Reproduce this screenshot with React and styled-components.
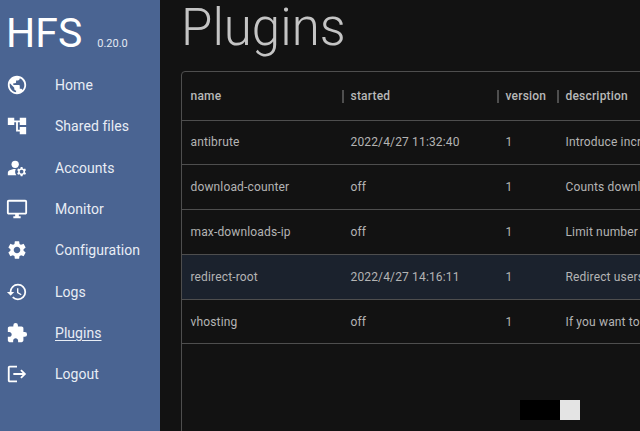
import React from 'react'
import styled, { createGlobalStyle } from 'styled-components'
import {
  MdPublic,
  MdAccountTree,
  MdManageAccounts,
  MdOutlineDesktopWindows,
  MdSettings,
  MdHistory,
  MdExtension,
  MdLogout,
} from 'react-icons/md'

const menu = [
  { label: 'Home', icon: MdPublic },
  { label: 'Shared files', icon: MdAccountTree },
  { label: 'Accounts', icon: MdManageAccounts },
  { label: 'Monitor', icon: MdOutlineDesktopWindows },
  { label: 'Configuration', icon: MdSettings },
  { label: 'Logs', icon: MdHistory },
  { label: 'Plugins', icon: MdExtension, active: true },
  { label: 'Logout', icon: MdLogout },
]

const plugins = [
  { name: 'antibrute', started: '2022/4/27 11:32:40', version: 1, description: 'Introduce increasing delays between login attempts' },
  { name: 'download-counter', started: 'off', version: 1, description: 'Counts downloads for each file' },
  { name: 'max-downloads-ip', started: 'off', version: 1, description: 'Limit number of concurrent downloads per IP' },
  { name: 'redirect-root', started: '2022/4/27 14:16:11', version: 1, description: 'Redirect users to another folder', hovered: true },
  { name: 'vhosting', started: 'off', version: 1, description: 'If you want to have different home folders' },
]

function App() {
  return (
    <Page>
      <GlobalStyle />
      <Sidebar>
        <Brand>
          <Logo>HFS</Logo>
          <Version>0.20.0</Version>
        </Brand>
        <Nav>
          {menu.map(({ label, icon: Icon, active }) => (
            <NavItem key={label}>
              <IconSlot><Icon size={22} /></IconSlot>
              <NavLabel $active={active}>{label}</NavLabel>
            </NavItem>
          ))}
        </Nav>
      </Sidebar>
      <Main>
        <Title>Plugins</Title>
        <TableBox>
          <Table>
            <thead>
              <tr>
                <HeadCell $width={160}>name</HeadCell>
                <HeadCell $width={155} $divider>started</HeadCell>
                <HeadCell $width={60} $divider>version</HeadCell>
                <HeadCell $divider>description</HeadCell>
              </tr>
            </thead>
            <tbody>
              {plugins.map(p => (
                <Row key={p.name} $hovered={p.hovered}>
                  <Cell>{p.name}</Cell>
                  <Cell>{p.started}</Cell>
                  <Cell>{p.version}</Cell>
                  <Cell>{p.description}</Cell>
                </Row>
              ))}
            </tbody>
          </Table>
        </TableBox>
      </Main>
      <Redaction>
        <RedactionDark />
        <RedactionLight />
      </Redaction>
    </Page>
  )
}

export default App

const GlobalStyle = createGlobalStyle`
  html, body {
    margin: 0;
    height: 100%;
    background: #121212;
    overflow: hidden;
  }
`

const Page = styled.div`
  position: relative;
  display: flex;
  width: 640px;
  height: 431px;
  overflow: hidden;
  font-family: Roboto, "Liberation Sans", sans-serif;
`

const Sidebar = styled.aside`
  flex: 0 0 160px;
  background: #4a6492;
  color: #fff;
`

const Brand = styled.div`
  display: flex;
  align-items: baseline;
  gap: 15px;
  padding: 9px 0 0 6px;
  height: 56px;
  box-sizing: border-box;
`

const Logo = styled.div`
  font-size: 41px;
  line-height: 48px;
  font-weight: 400;
`

const Version = styled.span`
  font-size: 11px;
  color: #e4e9f2;
`

const Nav = styled.nav`
  display: flex;
  flex-direction: column;
  padding-top: 8.5px;
`

const NavItem = styled.div`
  display: flex;
  align-items: center;
  height: 41.3px;
  padding-left: 6px;
`

const IconSlot = styled.span`
  display: flex;
  width: 49px;
  color: #fff;
`

const NavLabel = styled.span`
  font-size: 14px;
  letter-spacing: 0.05px;
  color: #e8edf5;
  text-decoration: ${p => (p.$active ? 'underline' : 'none')};
  text-underline-offset: 2px;
`

const Main = styled.main`
  flex: 1;
  min-width: 0;
  background: #121212;
  padding-left: 21px;
`

const Title = styled.h1`
  margin: 0 0 15px;
  height: 56px;
  font-size: 51px;
  line-height: 56px;
  font-weight: 300;
  color: #c4c4c4;
`

const TableBox = styled.div`
  width: 640px;
  height: 400px;
  border: 1px solid #4e4e4e;
  border-radius: 4px;
`

const Table = styled.table`
  border-collapse: collapse;
  table-layout: fixed;
  width: 100%;
`

const HeadCell = styled.th`
  position: relative;
  width: ${p => (p.$width ? `${p.$width}px` : 'auto')};
  height: 48px;
  padding: 1px 8px 0 8.5px;
  box-sizing: border-box;
  text-align: left;
  font-size: 12px;
  font-weight: 500;
  letter-spacing: 0.2px;
  color: #b8b8b8;
  border-bottom: 1px solid #4e4e4e;

  &::before {
    content: '';
    display: ${p => (p.$divider ? 'block' : 'none')};
    position: absolute;
    left: 0;
    top: 18px;
    width: 2px;
    height: 13px;
    background: #4e4e4e;
  }
`

const Row = styled.tr`
  height: 44.8px;
  background: ${p => (p.$hovered ? '#1b222d' : 'transparent')};
`

const Cell = styled.td`
  padding: 0 8px 0 8.5px;
  font-size: 12px;
  letter-spacing: 0.15px;
  color: #b4b4b4;
  white-space: nowrap;
  overflow: hidden;
  border-bottom: 1px solid #4e4e4e;
`

const Redaction = styled.div`
  position: absolute;
  left: 520px;
  top: 400px;
  display: flex;
  height: 20px;
`

const RedactionDark = styled.div`
  width: 40px;
  background: #000;
`

const RedactionLight = styled.div`
  width: 20px;
  background: #e4e4e4;
`
